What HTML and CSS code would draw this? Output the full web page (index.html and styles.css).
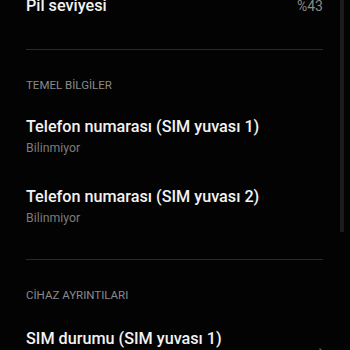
FILE: index.html
```html
<!DOCTYPE html>
<html lang="tr">
<head>
<meta charset="utf-8">
<link rel="stylesheet" href="styles.css">
</head>
<body>
<div class="screen">
  <div class="list">
    <div class="row row-top">
      <span class="title">Pil seviyesi</span>
      <span class="value">%43</span>
    </div>
    <div class="divider"></div>
    <div class="section">TEMEL BİLGİLER</div>
    <div class="item">
      <div class="title">Telefon numarası (SIM yuvası 1)</div>
      <div class="sub">Bilinmiyor</div>
    </div>
    <div class="item">
      <div class="title">Telefon numarası (SIM yuvası 2)</div>
      <div class="sub">Bilinmiyor</div>
    </div>
    <div class="divider divider-2"></div>
    <div class="section">CİHAZ AYRINTILARI</div>
    <div class="row row-link">
      <span class="title">SIM durumu (SIM yuvası 1)</span>
      <svg class="chev" width="8" height="12" viewBox="0 0 8 12"><path d="M1.5 1.5 L6 6 L1.5 10.5" fill="none" stroke="#5a5a5a" stroke-width="1.4"/></svg>
    </div>
  </div>
  <div class="scrollbar"></div>
</div>
</body>
</html>
```
FILE: styles.css
```css
html, body {
  margin: 0;
  padding: 0;
  background: #030303;
  overflow: hidden;
}
.screen {
  width: 350px;
  height: 350px;
  position: relative;
  overflow: hidden;
  font-family: Roboto, "Noto Sans", sans-serif;
}
.list {
  padding: 0 27px 0 26px;
  margin-top: -4px;
  display: flex;
  flex-direction: column;
}
.title {
  color: #f2f2f2;
  font-size: 16.2px;
  line-height: 20px;
  font-weight: 500;
}
.row {
  display: flex;
  justify-content: space-between;
  align-items: center;
}
.value {
  color: #8a8a8a;
  font-size: 14px;
  line-height: 20px;
}
.divider {
  height: 1px;
  background: #2a2a2a;
  margin-top: 33px;
}
.divider-2 {
  margin-top: 33px;
}
.section {
  color: #8a8a8a;
  font-size: 11.5px;
  line-height: 14px;
  margin-top: 28px;
}
.item {
  margin-top: 25px;
  display: flex;
  flex-direction: column;
}
.item + .item {
  margin-top: 31px;
}
.sub {
  color: #7c7c7c;
  font-size: 12.3px;
  line-height: 15px;
  margin-top: 4px;
}
.row-link {
  margin-top: 27px;
  align-items: flex-end;
}
.chev {
  margin-right: -3px;
  margin-bottom: -10px;
}
.scrollbar {
  position: absolute;
  right: 6px;
  top: 0;
  width: 4px;
  height: 232px;
  background: #1c1c1c;
}
```
